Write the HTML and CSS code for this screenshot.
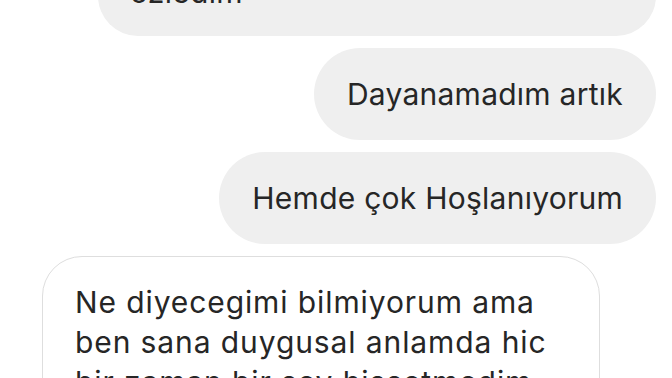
FILE: index.html
```html
<!DOCTYPE html>
<html lang="tr">
<head>
<meta charset="utf-8">
<title>Mesajlar</title>
<link rel="stylesheet" href="styles.css">
</head>
<body>
<div class="thread">
  <div class="msg out multi">Seni gerçekten çok fazla<br>özledim</div>
  <div class="msg out pill">Dayanamadım artık</div>
  <div class="msg out pill">Hemde çok Hoşlanıyorum</div>
  <div class="msg in">Ne diyecegimi bilmiyorum ama ben sana duygusal anlamda hic bir zaman bir şey hissetmedim ki</div>
</div>
</body>
</html>
```

FILE: styles.css
```css
html, body {
  margin: 0;
  padding: 0;
  background: #ffffff;
  overflow: hidden;
}
.thread {
  display: flex;
  flex-direction: column;
  gap: 12px;
  padding: 0 16px 0 42px;
  margin-top: -92px;
  font-family: Inter, "Liberation Sans", Arial, sans-serif;
  font-size: 30px;
  line-height: 40px;
  color: #262626;
}
.msg {
  max-width: 558px;
  box-sizing: border-box;
}
.out {
  align-self: flex-end;
  background: #efefef;
}
.multi {
  width: 558px;
  border-radius: 40px;
  padding: 24px 32px;
  letter-spacing: 0.3px;
}
.pill {
  height: 92px;
  border-radius: 46px;
  padding: 0 33px;
  display: flex;
  align-items: center;
  white-space: nowrap;
  letter-spacing: 0.25px;
}
.in {
  align-self: flex-start;
  width: 558px;
  border: 1px solid #dedede;
  border-radius: 40px;
  padding: 25px 32px 24px;
  background: #ffffff;
  letter-spacing: 0.9px;
}
```
